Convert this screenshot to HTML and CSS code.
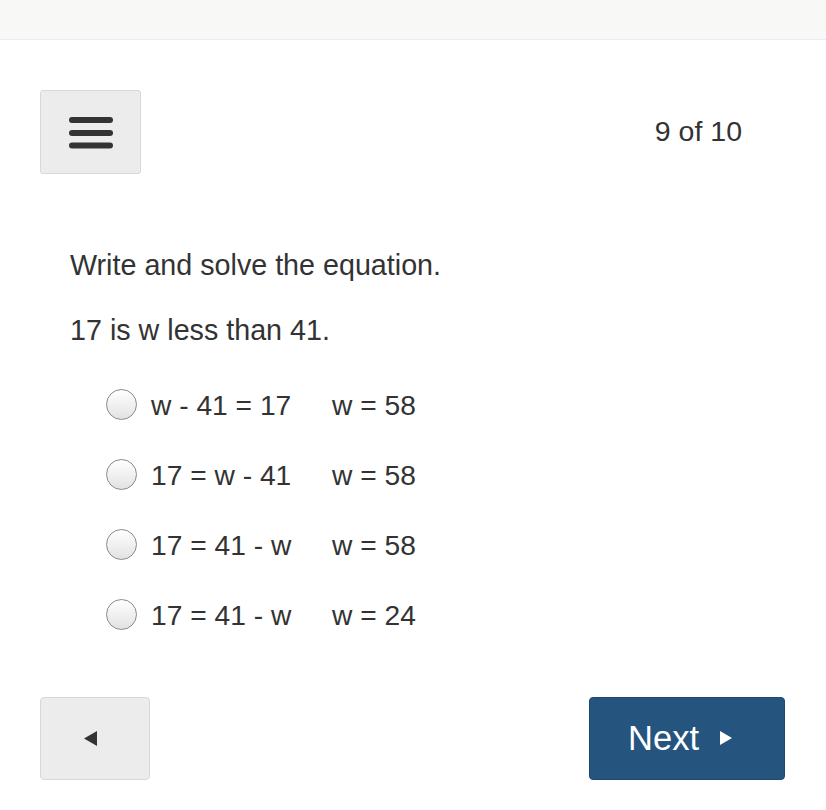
FILE: index.html
```html
<!DOCTYPE html>
<html>
<head>
<meta charset="utf-8">
<link rel="stylesheet" href="styles.css">
</head>
<body>
<div class="topbar"></div>
<div class="page">
  <div class="toprow">
    <button class="menu-btn" aria-label="Menu">
      <svg width="44" height="32" viewBox="0 0 44 32">
        <line x1="3" y1="3" x2="41" y2="3" stroke="#333" stroke-width="6" stroke-linecap="round"/>
        <line x1="3" y1="16" x2="41" y2="16" stroke="#333" stroke-width="6" stroke-linecap="round"/>
        <line x1="3" y1="28.5" x2="41" y2="28.5" stroke="#333" stroke-width="6" stroke-linecap="round"/>
      </svg>
    </button>
    <div class="counter">9 of 10</div>
  </div>
  <div class="question">
    <p class="q-line q-first">Write and solve the equation.</p>
    <p class="q-line q-second">17 is w less than 41.</p>
    <div class="options">
      <label class="option"><span class="radio"></span><span class="eq">w - 41 = 17</span><span class="sol">w = 58</span></label>
      <label class="option"><span class="radio"></span><span class="eq">17 = w - 41</span><span class="sol">w = 58</span></label>
      <label class="option"><span class="radio"></span><span class="eq">17 = 41 - w</span><span class="sol">w = 58</span></label>
      <label class="option"><span class="radio"></span><span class="eq">17 = 41 - w</span><span class="sol">w = 24</span></label>
    </div>
  </div>
  <div class="navrow">
    <button class="back-btn" aria-label="Back">
      <svg width="15" height="17" viewBox="0 0 15 17"><polygon points="14,1 14,16 1,8.5" fill="#333"/></svg>
    </button>
    <button class="next-btn">Next<svg class="next-arrow" width="14" height="16" viewBox="0 0 14 16"><polygon points="1,1 1,15 13,8" fill="#fff"/></svg></button>
  </div>
</div>
</body>
</html>
```
FILE: styles.css
```css
html, body {
  margin: 0;
  padding: 0;
  background: #fff;
}
body {
  font-family: "Liberation Sans", Arial, sans-serif;
  color: #333;
}
.topbar {
  height: 39px;
  background: #f8f8f7;
  border-bottom: 1px solid #ececec;
}
.page {
  padding: 50px 41px 0 40px;
}
.toprow {
  display: flex;
  justify-content: space-between;
  align-items: center;
}
.menu-btn {
  width: 101px;
  height: 84px;
  background: #ececec;
  border: 1px solid #d8d8d8;
  border-radius: 3px;
  display: flex;
  align-items: center;
  justify-content: center;
  padding: 0;
  padding-top: 2px;
}
.counter {
  font-size: 28.5px;
  margin-right: 43px;
  margin-top: -2px;
  color: #333;
}
.question {
  padding-left: 30px;
}
.q-line {
  margin: 0;
  font-size: 28.7px;
  line-height: 40px;
}
.q-first {
  margin-top: 71px;
}
.q-second {
  margin-top: 25px;
}
.options {
  margin-top: 35px;
  padding-left: 36px;
  display: flex;
  flex-direction: column;
  gap: 30px;
}
.option {
  display: flex;
  align-items: center;
  height: 40px;
  font-size: 28.2px;
}
.radio {
  width: 29px;
  height: 29px;
  border: 1px solid #8a8a8a;
  border-radius: 50%;
  background: linear-gradient(#ffffff, #e2e2e2);
  margin-right: 14px;
  margin-top: -1px;
  flex: none;
}
.eq {
  display: inline-block;
  width: 181px;
}
.navrow {
  margin-top: 62px;
  display: flex;
  justify-content: space-between;
}
.back-btn {
  width: 110px;
  height: 83px;
  background: #ececec;
  border: 1px solid #d8d8d8;
  border-radius: 4px;
  display: flex;
  align-items: center;
  justify-content: center;
  padding: 0 10px 0 0;
}
.next-btn {
  width: 196px;
  height: 83px;
  background: #25547f;
  border: 1px solid #1e4a72;
  border-radius: 4px;
  color: #fff;
  font-family: "Liberation Sans", Arial, sans-serif;
  font-size: 34.5px;
  display: flex;
  align-items: center;
  justify-content: center;
  padding: 0 13px 0 0;
}
.next-arrow {
  margin-left: 20px;
  margin-top: -2px;
}
```
